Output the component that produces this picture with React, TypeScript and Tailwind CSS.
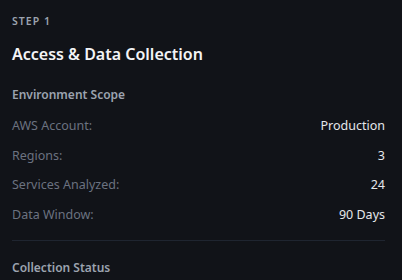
const scope = [
  { label: 'AWS Account:', value: 'Production' },
  { label: 'Regions:', value: '3' },
  { label: 'Services Analyzed:', value: '24' },
  { label: 'Data Window:', value: '90 Days' },
];

export default function App() {
  return (
    <div
      className="w-[402px] h-[280px] overflow-hidden bg-[#111318] pl-3 pr-[17px] pt-[13px]"
      style={{ fontFamily: '"Noto Sans", "Open Sans", sans-serif' }}
    >
      <div className="text-[10.5px] font-semibold tracking-[0.1em] uppercase text-[#9ca3af] leading-4">Step 1</div>
      <h2 className="mt-[13px] text-[16px] font-semibold text-[#f3f4f6] leading-6">Access &amp; Data Collection</h2>

      <h3 className="mt-[19px] text-[12px] font-semibold text-[#9ca3af] leading-5">Environment Scope</h3>
      <div className="mt-[7px] flex flex-col">
        {scope.map((row) => (
          <div key={row.label} className="flex items-center justify-between h-[29.5px] text-[12.5px]">
            <span className="text-[#6b7280]">{row.label}</span>
            <span className="text-[#e5e7eb]">{row.value}</span>
          </div>
        ))}
      </div>

      <div className="mt-[10px] border-t border-[#1f2530]" />
      <h3 className="mt-[17px] text-[12px] font-semibold text-[#9ca3af] leading-5">Collection Status</h3>
    </div>
  );
}
